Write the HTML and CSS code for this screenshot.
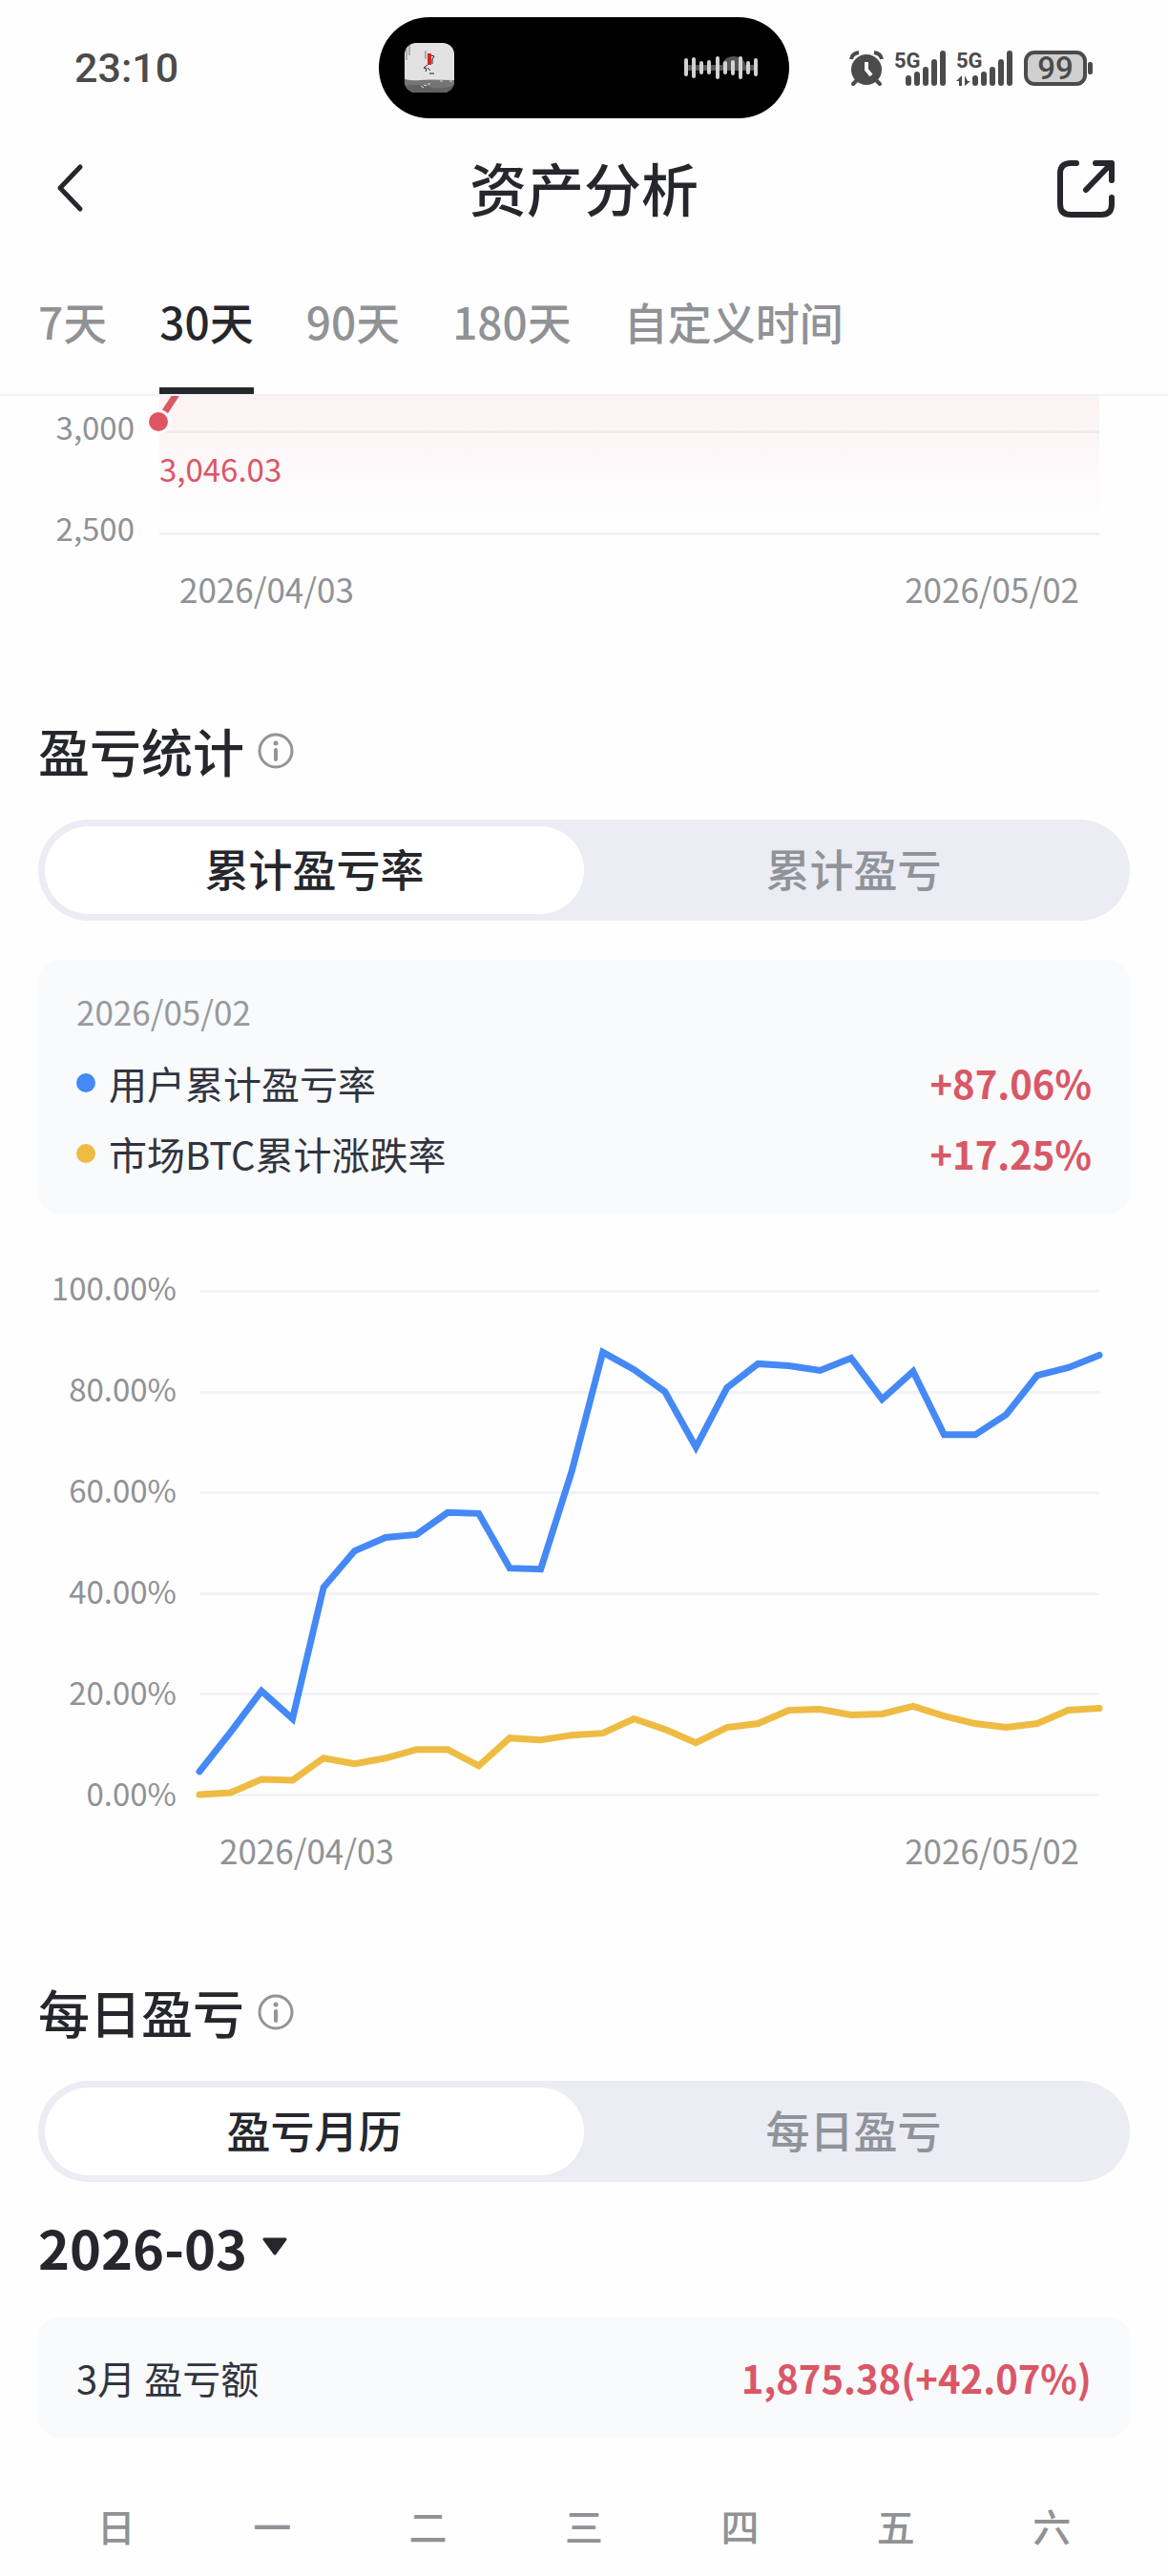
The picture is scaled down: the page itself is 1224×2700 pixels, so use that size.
FILE: index.html
```html
<!DOCTYPE html>
<html lang="zh-CN">
<head>
<meta charset="UTF-8">
<meta name="viewport" content="width=device-width, initial-scale=1.0">
<title>资产分析</title>
<link rel="stylesheet" href="styles.css">
</head>
<body>

<!-- Status bar -->
<div class="status-bar">
    <span class="clock">23:10</span>
    <div class="island">
        <svg class="cover" viewBox="0 0 52 52">
            <defs><clipPath id="cover-clip"><rect width="52" height="52" rx="12"/></clipPath></defs>
            <g clip-path="url(#cover-clip)">
                <rect width="52" height="52" fill="#e2e2e2"/>
                <path d="M0 38q8 2 16 1t36 0v13H0z" fill="#757575"/>
                <path d="M0 45q14-3 26 1t26-2v8H0z" fill="#616161"/>
                <path d="M17 45l3 2M20 44l3 1M24 43h3M37 40h3M47 40h3" stroke="#ddd" stroke-width="1"/>
                <path d="M2 2v16M5 1v12M22 8v9" stroke="#777" stroke-width="1"/>
                <path d="M24 11h4v12h-4z" fill="#d32a1c"/>
                <path d="M28 13l3 1-2 3v5M24 23l-4 3 3 1-1 3M24 26l3 3M26 32h5" fill="none" stroke="#222" stroke-width="1"/>
            </g>
        </svg>
        <svg class="wave" viewBox="0 0 78 24">
            <path d="M4 12h70" stroke="#555" stroke-width="6"/>
            <path d="M40 9a12 9 0 0 1 24 0z" fill="#555"/>
            <path d="M2 4v15M10 3v18M18 7v10M26 6v11M35 2v20M43 7v10M51 6v12M59 2v20M67 7v10M75 4v15" stroke="#d2d2d2" stroke-width="4" stroke-linecap="round"/>
        </svg>
    </div>
    <div class="status-icons">
        <svg class="alarm" viewBox="0 0 36 37">
            <path d="M8 31l-4 4M28 31l4 4" stroke="#4b4b4b" stroke-width="4" stroke-linecap="round"/>
            <circle cx="18" cy="20" r="16" fill="#4b4b4b"/>
            <path d="M2 9q1-6 8-7M34 9q-1-6-8-7" fill="none" stroke="#4b4b4b" stroke-width="4"/>
            <path d="M18 12v8l5 6" fill="none" stroke="#fff" stroke-width="4"/>
        </svg>
        <svg class="signal" viewBox="0 0 54 37">
            <text x="0" y="18">5G</text>
            <path d="M15 29v5M24 25v9M33 20v14M42 12v22M51 3v31" stroke="#4b4b4b" stroke-width="6" stroke-linecap="round"/>
        </svg>
        <svg class="signal wide" viewBox="0 0 60 37">
            <text x="0" y="18">5G</text>
            <path d="M6 37V26L0 32h3v5zM9 26v11l6-5h-3z" fill="#4b4b4b"/>
            <path d="M20 29v5M29 25v9M38 20v14M47 12v22M56 3v31" stroke="#4b4b4b" stroke-width="6" stroke-linecap="round"/>
        </svg>
        <svg class="battery" viewBox="0 0 73 37">
            <rect x="2" y="2" width="62" height="33" rx="9" fill="#cfcfcf" stroke="#4b4b4b" stroke-width="4"/>
            <rect x="67" y="12" width="5" height="13" rx="2" fill="#4b4b4b"/>
            <text x="33" y="30">99</text>
        </svg>
    </div>
</div>

<!-- Title bar -->
<header class="title-bar">
    <button class="icon-btn" type="button" aria-label="返回">
        <svg width="60" height="60" viewBox="0 0 60 60"><path d="M28 7L7 29l21 22" fill="none" stroke="#25272c" stroke-width="5" stroke-linecap="round" stroke-linejoin="round"/></svg>
    </button>
    <h1>资产分析</h1>
    <button class="icon-btn" type="button" aria-label="分享">
        <svg width="60" height="60" viewBox="0 0 60 60"><path d="M20 3h-6Q3 3 3 14v32q0 11 11 11h32q11 0 11-11v-7M40 3h17v18M57 3L30 31" fill="none" stroke="#25272c" stroke-width="6" stroke-linecap="round" stroke-linejoin="round"/></svg>
    </button>
</header>

<nav class="tabs">
    <button class="tab" type="button">7天</button>
    <button class="tab active" type="button">30天</button>
    <button class="tab" type="button">90天</button>
    <button class="tab" type="button">180天</button>
    <button class="tab" type="button">自定义时间</button>
</nav>

<main>
    <!-- Asset trend, scrolled under the tabs -->
    <section class="asset-chart">
        <div class="asset-axis">
            <span>3,000</span>
            <span>2,500</span>
        </div>
        <div class="asset-plot">
            <span class="asset-value">3,046.03</span>
            <svg class="asset-start" viewBox="0 0 40 50">
                <path d="M13 27L32-2" stroke="#da5766" stroke-width="7"/>
                <circle cx="13" cy="27" r="13" fill="#fff"/>
                <circle cx="13" cy="27" r="10" fill="#e15462"/>
            </svg>
        </div>
        <div class="dates">
            <span>2026/04/03</span>
            <span>2026/05/02</span>
        </div>
    </section>

    <!-- Profit and loss statistics -->
    <section class="stats">
        <div class="section-title">
            <h2>盈亏统计</h2>
            <button class="info" type="button" aria-label="说明">
                <svg width="38" height="38" viewBox="0 0 38 38"><circle cx="19" cy="19" r="17" fill="none" stroke="#929497" stroke-width="3"/><circle cx="19" cy="11" r="2.5" fill="#929497"/><path d="M19 18v10" stroke="#929497" stroke-width="4" stroke-linecap="round"/></svg>
            </button>
        </div>
        <div class="segment">
            <button class="active" type="button">累计盈亏率</button>
            <button type="button">累计盈亏</button>
        </div>
        <div class="card">
            <div class="card-date">2026/05/02</div>
            <div class="card-row">
                <span class="dot blue"></span>
                <span>用户累计盈亏率</span>
                <strong>+87.06%</strong>
            </div>
            <div class="card-row">
                <span class="dot yellow"></span>
                <span>市场BTC累计涨跌率</span>
                <strong>+17.25%</strong>
            </div>
        </div>

        <div class="rate-chart">
            <div class="rate-axis">
                <span>100.00%</span>
                <span>80.00%</span>
                <span>60.00%</span>
                <span>40.00%</span>
                <span>20.00%</span>
                <span>0.00%</span>
            </div>
            <div class="rate-plot">
                <hr><hr><hr><hr><hr><hr>
                <svg viewBox="0 0 29 528" preserveAspectRatio="none">
                    <polyline class="line-market" points="0,526 1,524 2,510 3,511 4,488 5,494 6,488 7,479 8,479 9,496 10,467 11,469 12,464 13,462 14,447 15,458 16,472 17,456 18,452 19,438 20,437 21,443 22,442 23,434 24,444 25,452 26,456 27,452 28,438 29,436"/>
                    <polyline class="line-user" points="0,502 1,461 2,418 3,447 4,310 5,272 6,258 7,255 8,232 9,233 10,290 11,291 12,189 13,65 14,83 15,106 16,164 17,102 18,77 19,79 20,84 21,71 22,114 23,85 24,151 25,151 26,130 27,89 28,81 29,68"/>
                </svg>
            </div>
            <div class="dates">
                <span>2026/04/03</span>
                <span>2026/05/02</span>
            </div>
        </div>
    </section>

    <!-- Daily profit and loss -->
    <section class="daily">
        <div class="section-title">
            <h2>每日盈亏</h2>
            <button class="info" type="button" aria-label="说明">
                <svg width="38" height="38" viewBox="0 0 38 38"><circle cx="19" cy="19" r="17" fill="none" stroke="#929497" stroke-width="3"/><circle cx="19" cy="11" r="2.5" fill="#929497"/><path d="M19 18v10" stroke="#929497" stroke-width="4" stroke-linecap="round"/></svg>
            </button>
        </div>
        <div class="segment">
            <button class="active" type="button">盈亏月历</button>
            <button type="button">每日盈亏</button>
        </div>
        <button class="month" type="button">
            2026-03
            <svg width="26" height="20" viewBox="0 0 26 20"><path d="M2 2h22L13 17z" fill="#25272c" stroke="#25272c" stroke-width="3" stroke-linejoin="round"/></svg>
        </button>
        <div class="card month-card">
            <div class="card-row">
                <span>3月 盈亏额</span>
                <strong>1,875.38(+42.07%)</strong>
            </div>
        </div>
        <div class="weekdays">
            <span>日</span>
            <span>一</span>
            <span>二</span>
            <span>三</span>
            <span>四</span>
            <span>五</span>
            <span>六</span>
        </div>
    </section>
</main>

</body>
</html>
```
FILE: styles.css
```css
* {
    box-sizing: border-box;
}
body {
    margin: 0;
    background-color: #fefefe;
    color: #25272c;
    font-family: "Noto Sans CJK SC", sans-serif;
    font-size: 40px;
}
button {
    padding: 0;
    border: none;
    background: none;
    color: inherit;
    font-family: inherit;
    cursor: pointer;
}
svg {
    display: block;
}
h1,
h2 {
    margin: 0;
    font-weight: 500;
}

/* Status bar */
.status-bar {
    display: grid;
    grid-template-columns: 1fr auto 1fr;
    align-items: center;
    height: 142px;
    padding: 0 78px;
}
.clock {
    color: #4b4b4b;
    font-family: Roboto, sans-serif;
    font-size: 43px;
    font-weight: 500;
}
.island {
    display: flex;
    align-items: center;
    justify-content: space-between;
    width: 430px;
    height: 106px;
    padding: 0 32px 0 27px;
    border-radius: 53px;
    background-color: #000;
}
.cover {
    width: 52px;
    height: 52px;
}
.wave {
    width: 78px;
    height: 24px;
}
.status-icons {
    display: flex;
    align-items: center;
    justify-content: flex-end;
    gap: 11px;
}
.status-icons svg {
    height: 37px;
    overflow: visible;
}
.status-icons text {
    fill: #4b4b4b;
    font-family: Roboto, sans-serif;
    font-weight: 700;
}
.alarm {
    width: 36px;
}
.signal {
    width: 54px;
}
.signal.wide {
    width: 60px;
}
.signal text {
    font-size: 22px;
}
.battery {
    width: 73px;
}
.battery text {
    font-size: 33px;
    font-weight: 500;
    text-anchor: middle;
}

/* Title bar */
.title-bar {
    display: flex;
    align-items: center;
    justify-content: space-between;
    height: 112px;
    padding: 0 56px;
}
.title-bar h1 {
    padding-bottom: 4px;
    font-size: 60px;
    line-height: 72px;
}

/* Range tabs */
.tabs {
    display: flex;
    gap: 55px;
    padding: 0 40px;
    border-bottom: 2px solid #f1f1f3;
}
.tab {
    padding: 52px 0 40px;
    border-bottom: 7px solid transparent;
    color: #909295;
    font-size: 46px;
    font-weight: 500;
    line-height: 60px;
}
.tab.active {
    border-color: #25272c;
    color: #25272c;
}

main {
    padding: 0 40px;
}

/* Charts */
.asset-chart,
.rate-chart {
    display: grid;
    padding-right: 32px;
    color: #909295;
    font-size: 33px;
    line-height: 48px;
}
.asset-chart {
    grid-template-columns: 127px 1fr;
}
.asset-axis {
    display: flex;
    flex-direction: column;
    gap: 58px;
    padding: 8px 26px 0 0;
    text-align: right;
}
.asset-plot {
    position: relative;
    height: 146px;
    border-bottom: 3px solid #f1f2f6;
    background:
        linear-gradient(#f3e9ed, #f3e9ed) 0 36px / 100% 3px no-repeat,
        linear-gradient(#fbf2f3, #fefefe 130px);
}
.asset-value {
    position: absolute;
    top: 52px;
    left: 0;
    color: #da5766;
}
.asset-start {
    position: absolute;
    top: 0;
    left: -14px;
    width: 40px;
    height: 50px;
}
.dates {
    display: flex;
    grid-column: 2;
    justify-content: space-between;
    padding: 0 21px;
    font-size: 35px;
}
.asset-chart .dates {
    margin-top: 16px;
}
.rate-chart {
    grid-template-columns: 169px 1fr;
    margin-top: 80px;
}
.rate-axis {
    display: flex;
    flex-direction: column;
    justify-content: space-between;
    margin: -27px 0 -20px;
    padding-right: 24px;
    text-align: right;
}
.rate-plot {
    display: flex;
    flex-direction: column;
    justify-content: space-between;
    position: relative;
    height: 531px;
}
.rate-plot hr {
    width: 100%;
    height: 3px;
    margin: 0;
    border: none;
    background-color: #f2f3f8;
}
.rate-plot svg {
    position: absolute;
    inset: 0;
    width: 100%;
    height: 100%;
    overflow: visible;
}
.rate-plot polyline {
    fill: none;
    stroke-width: 7px;
    stroke-linecap: round;
    vector-effect: non-scaling-stroke;
}
.line-user {
    stroke: #4489f5;
}
.line-market {
    stroke: #eebb43;
}
.rate-chart .dates {
    margin-top: 32px;
}

/* Section title */
.section-title {
    display: flex;
    align-items: center;
    gap: 14px;
}
.section-title h2 {
    font-size: 54px;
    line-height: 72px;
}
.stats,
.daily {
    margin-top: 110px;
}

/* Segmented switch */
.segment {
    display: flex;
    height: 106px;
    margin-top: 36px;
    padding: 7px;
    border-radius: 53px;
    background-color: #ebecf4;
}
.segment button {
    flex: 1;
    padding-bottom: 6px;
    border-radius: 46px;
    color: #909399;
    font-size: 46px;
    font-weight: 500;
    line-height: 60px;
}
.segment button.active {
    background-color: #fff;
    color: #25272c;
}

/* Cards */
.card {
    margin-top: 41px;
    padding: 30px 40px 32px;
    border-radius: 22px;
    background-color: #f8fafc;
}
.card-date {
    margin-bottom: 20px;
    color: #98999b;
    font-size: 35px;
    line-height: 48px;
}
.card-row {
    display: flex;
    align-items: center;
    color: #31343f;
    font-size: 40px;
    line-height: 62px;
}
.card-row + .card-row {
    margin-top: 12px;
}
.card-row strong {
    margin-left: auto;
    color: #da5766;
}
.dot {
    width: 20px;
    height: 20px;
    margin-right: 14px;
    border-radius: 50%;
}
.blue {
    background-color: #4489f5;
}
.yellow {
    background-color: #eebb43;
}

/* Month calendar */
.month {
    display: flex;
    align-items: center;
    gap: 16px;
    margin-top: 32px;
    font-size: 56px;
    font-weight: 700;
    line-height: 72px;
}
.month-card {
    margin-top: 38px;
    padding: 32px 40px;
}
.weekdays {
    display: grid;
    grid-template-columns: repeat(7, 1fr);
    margin-top: 62px;
    color: #909295;
    font-weight: 500;
    line-height: 60px;
    text-align: center;
}
```
